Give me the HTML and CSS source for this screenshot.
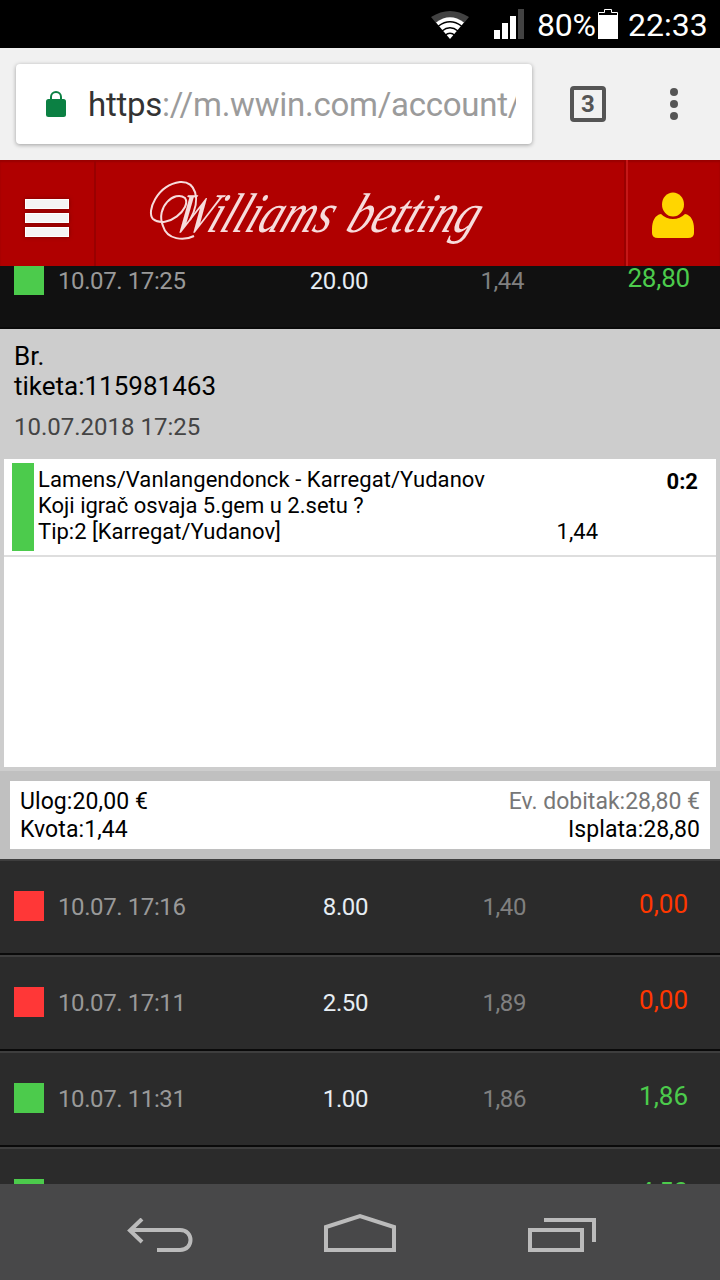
FILE: index.html
```html
<!DOCTYPE html>
<html lang="bs">
<head>
<meta charset="utf-8">
<title>Williams betting</title>
<link rel="stylesheet" href="styles.css">
</head>
<body>
<div class="phone">
  <div class="status">
    <svg class="wifi" width="40" height="30" viewBox="0 0 40 30">
      <path d="M0 8 Q19 -4 38 8 L33 14 Q19 4 5 14Z" fill="#424242"/>
      <path d="M5 13.5 Q19 3 33 13.5 L19 30Z" fill="#fff"/>
      <path d="M7.500 17 Q19 8.500 30.500 17M11 22 Q19 15.500 27 22M14 26.500 Q19 22 24 26.500" fill="none" stroke="#000" stroke-width="1.500"/>
    </svg>
    <svg class="signal" width="30" height="30" viewBox="0 0 30 30">
      <path d="M0 21h6v9H0zM8 14h6v16H8zM16 7h6v23h-6z" fill="#fff"/><path d="M24 0h6v30h-6z" fill="#424242"/>
    </svg>
    <span class="percent">80%</span>
    <svg class="battery" width="20" height="30" viewBox="0 0 20 30"><path d="M.5 29.500V3.500H6.500V.5H13.500V3.500H19.500V29.500Z" fill="#000" stroke="#fff"/><path d="M0 6h20v24H0z" fill="#fff"/></svg>
    <span class="clock">22:33</span>
  </div>
  <div class="browser">
    <div class="urlbox">
      <svg width="20" height="26" viewBox="0 0 20 26"><path d="M5 9V6a5 5 0 0 1 10 0v3" fill="none" stroke="#0b8043" stroke-width="2"/><rect y="8" width="20" height="18" rx="2.500" fill="#0b8043"/></svg>
      <div class="url"><span class="scheme">https</span>://m.wwin.com/account/</div>
    </div>
    <div class="tabs">3</div>
    <svg class="dots" width="8" height="32" viewBox="0 0 8 32" fill="#555"><circle cx="4" cy="4" r="4"/><circle cx="4" cy="16" r="4"/><circle cx="4" cy="28" r="4"/></svg>
  </div>
  <header class="header">
    <div class="menu"><i></i><i></i><i></i></div>
    <svg class="logo" width="350" height="106" viewBox="0 0 350 106">
      <path d="M50 60C62 38 55 21 40 22C17 25 6 52 13 59C27 70 52 48 45 38C35 30 15 47 23 66C27 80 44 81 54 76" fill="none" stroke="#f7dcdc" stroke-width="2"/>
      <g transform="translate(0 72) skewX(-22)">
        <text class="word" x="30" y="0" textLength="158" lengthAdjust="spacingAndGlyphs">Williams</text>
        <text class="word" x="204" y="0" textLength="130" lengthAdjust="spacingAndGlyphs">betting</text>
      </g>
    </svg>
    <div class="user">
      <svg width="42" height="48" viewBox="0 0 42 48" fill="#ffd600"><ellipse cx="21" cy="12.500" rx="11" ry="12"/><path d="M9 22Q14 27 21 27T33 22C39 23 42 29 42 37V41Q42 46 36 46H6Q0 46 0 41V37C0 29 3 23 9 22Z"/></svg>
    </div>
  </header>
  <main class="list">
    <div class="row open"><i class="mark win"></i><span class="date">10.07. 17:25</span><span class="stake">20.00</span><span class="odds">1,44</span><span class="pay won">28,80</span></div>
    <section class="ticket">
      <div class="number">Br.<br>tiketa:115981463</div>
      <div class="when">10.07.2018 17:25</div>
      <div class="bets">
        <div class="bet">
          <i class="bar"></i>
          <div class="info">
            <div class="match">Lamens/Vanlangendonck - Karregat/Yudanov</div>
            <div class="question">Koji igrač osvaja 5.gem u 2.setu ?</div>
            <div class="tip"><span class="pick">Tip:2 [Karregat/Yudanov]</span><span class="quote">1,44</span></div>
          </div>
          <b class="score">0:2</b>
        </div>
      </div>
    </section>
    <section class="summary">
      <div class="sums">
        <div><p class="ulog">Ulog:20,00 €</p><p class="kvota">Kvota:1,44</p></div>
        <div class="right"><p class="gain">Ev. dobitak:28,80 €</p><p class="isplata">Isplata:28,80</p></div>
      </div>
    </section>
    <div class="row"><i class="mark loss"></i><span class="date">10.07. 17:16</span><span class="stake">8.00</span><span class="odds">1,40</span><span class="pay lost">0,00</span></div>
    <div class="row"><i class="mark loss"></i><span class="date">10.07. 17:11</span><span class="stake">2.50</span><span class="odds">1,89</span><span class="pay lost">0,00</span></div>
    <div class="row"><i class="mark win"></i><span class="date">10.07. 11:31</span><span class="stake">1.00</span><span class="odds">1,86</span><span class="pay won">1,86</span></div>
    <div class="row"><i class="mark win"></i><span class="date"></span><span class="stake"></span><span class="odds"></span><span class="pay won">4,50</span></div>
  </main>
  <nav class="nav">
    <svg width="66" height="36" viewBox="0 0 66 36"><path d="M15 1L3 12.500L15 24M4 12H53C67 12 67 32 53 32H30"/></svg>
    <svg width="72" height="40" viewBox="0 0 72 40"><path d="M2 38V15L36 4L70 15V38Z"/></svg>
    <svg width="68" height="36" viewBox="0 0 68 36"><path d="M2 14H54V34H2ZM16 4H66V26"/></svg>
  </nav>
</div>
</body>
</html>
```
FILE: styles.css
```css
* { box-sizing: border-box; }
body { margin: 0; font-family: Roboto, sans-serif; }
p { margin: 0; }
svg { display: block; flex: none; }
.phone { width: 720px; height: 1280px; display: flex; flex-direction: column; overflow: hidden; }

.status { height: 48px; flex: none; background: #000; color: #fff; display: flex; align-items: flex-start; padding: 9px 0 0 431px; font-size: 32px; line-height: 32px; white-space: nowrap; }
.signal { margin-left: 23px; }
.percent { width: 61px; margin-left: 13px; letter-spacing: -0.2px; }
.clock { margin-left: 10px; }

.browser { height: 112px; flex: none; background: #f1f1f1; display: flex; align-items: center; padding-left: 16px; }
.urlbox { width: 516px; height: 80px; background: #fff; border-radius: 4px; box-shadow: 0 1px 4px rgba(0,0,0,.35); display: flex; align-items: center; padding: 0 16px 0 30px; }
.url { width: 428px; margin-left: 22px; padding-top: 1px; overflow: hidden; white-space: nowrap; color: #9b9b9b; font-size: 33px; line-height: 44px; letter-spacing: -0.25px; }
.scheme { color: #333; }
.tabs { width: 36px; height: 36px; margin-left: 38px; border: 4px solid #555; border-radius: 4px; color: #555; font-size: 24px; font-weight: 700; line-height: 28px; text-align: center; }
.dots { margin-left: 64px; }

.header { height: 106px; flex: none; background: #b00000; display: flex; box-shadow: inset 0 2px 2px #900; }
.menu { width: 96px; height: 106px; border-right: 2px solid #900; padding: 39px 0 0 25px; display: flex; flex-direction: column; gap: 4px; }
.menu i { width: 44px; height: 10px; background: #f4f4f4; border: 1px solid #fff; box-shadow: 0 0 4px #700; }
.logo { margin-left: 44px; overflow: visible; }
.word { font: italic 56px "Liberation Serif", serif; fill: #f7dcdc; }
.user { width: 96px; margin-left: auto; border-left: 2px solid #900; box-shadow: inset 2px 0 #c51717; padding: 32px 0 0 26px; }

.list { height: 918px; flex: none; overflow: hidden; background: #2b2b2b; }
.row { height: 96px; display: flex; padding: 30px 0 0 14px; background: #2b2b2b; border-top: 2px solid #3e3e3e; border-bottom: 2px solid #0a0a0a; font-size: 24px; line-height: 32px; white-space: nowrap; letter-spacing: -0.4px; }
.row.open { margin-top: -33px; background: #111; }
.mark { width: 30px; height: 30px; }
.win, .bar { background: #4ccb4c; }
.loss { background: #ff3737; }
.date { width: 150px; margin-left: 14px; color: #999; }
.stake { width: 160px; color: #e6edf3; text-align: right; }
.odds { width: 158px; color: #808080; text-align: right; }
.open .odds { width: 156px; }
.pay { width: 162px; font-size: 26px; line-height: 26px; letter-spacing: 0; text-align: right; }
.open .pay { width: 166px; letter-spacing: -0.2px; }
.won { color: #4ccb4c; }
.lost { color: #ff3700; }

.ticket { height: 442px; background: #cdcdcd; padding: 12px 4px 4px; color: #000; }
.number { padding-left: 10px; font-size: 26px; line-height: 30px; }
.when { padding-left: 10px; margin-top: 12px; color: #444; font-size: 24px; line-height: 28px; }
.bets { height: 308px; margin-top: 18px; background: #fff; }
.bet { height: 98px; display: flex; padding: 4px 18px 0 8px; border-bottom: 2px solid #dedede; }
.bar { width: 22px; height: 88px; }
.info { width: 600px; margin-left: 4px; padding-top: 4px; font-size: 22px; line-height: 26px; white-space: nowrap; }
.match { letter-spacing: 0.06px; }
.tip { display: flex; }
.quote { margin-left: auto; padding-right: 40px; }
.score { margin-left: auto; margin-top: 6px; font-size: 22px; line-height: 26px; }

.summary { height: 88px; padding: 10px; background: #c0c0c0; }
.sums { height: 68px; padding: 7px 10px 5px; background: #fff; display: flex; justify-content: space-between; font-size: 23px; line-height: 28px; color: #000; }
.right { text-align: right; }
.gain { color: #777; }
.ulog, .kvota, .isplata { letter-spacing: 0.08px; }

.nav { height: 96px; flex: none; background: #484849; display: flex; padding: 30px 0 0 127px; }
.nav svg { fill: none; stroke: #bbb; stroke-width: 4; }
.nav svg:nth-child(1) { margin-top: 4px; }
.nav svg:nth-child(2) { margin-left: 131px; margin-top: -2px; }
.nav svg:nth-child(3) { margin-left: 132px; margin-top: 2px; }
```
